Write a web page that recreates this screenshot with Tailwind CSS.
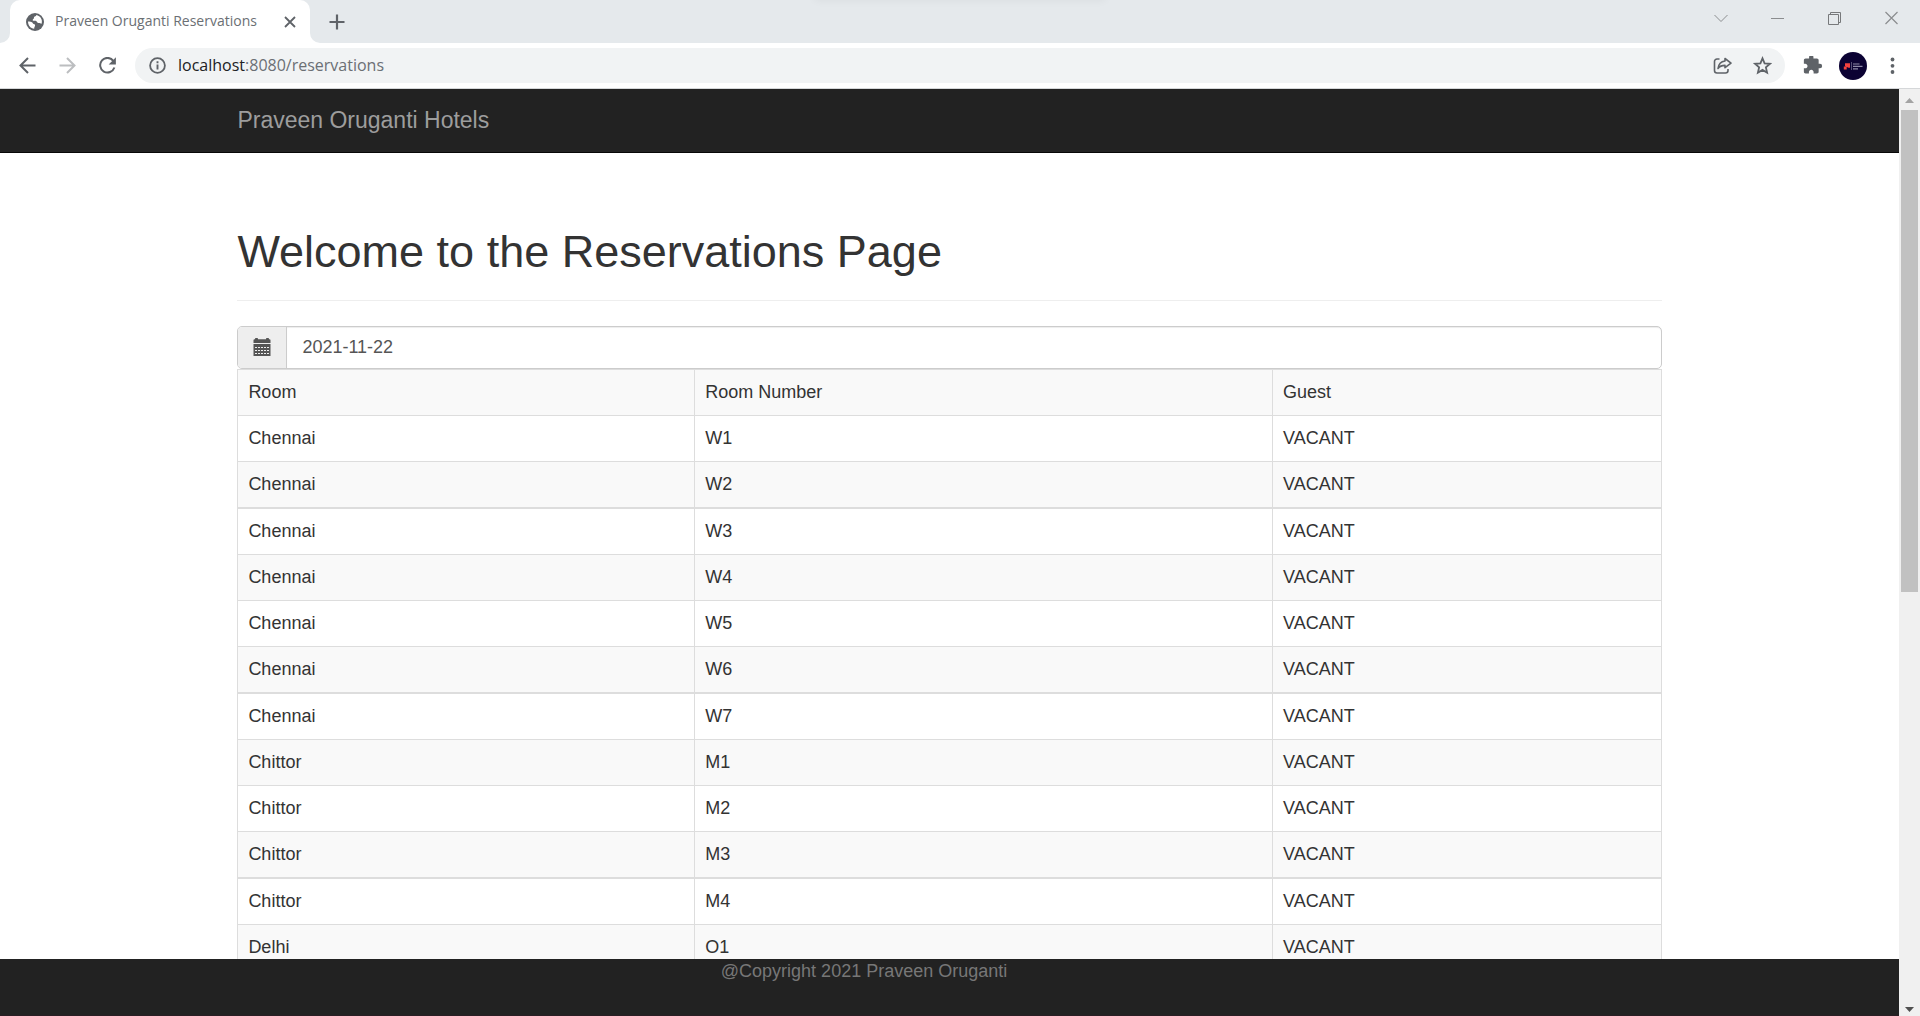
<!DOCTYPE html>
<html lang="en">
<head>
<meta charset="utf-8">
<title>Praveen Oruganti Reservations</title>
<script src="https://cdn.jsdelivr.net/npm/@tailwindcss/browser@4"></script>
</head>
<body class="flex h-screen flex-col overflow-hidden bg-white font-['Liberation_Sans',Arial,sans-serif] text-lg leading-[25px] text-[#333]">

<!-- Tab strip -->
<header class="relative flex h-[43px] shrink-0 items-stretch bg-[#e5e9ec] pl-[10px] font-['Open_Sans',sans-serif]">
  <div class="absolute left-1/2 top-[-10px] h-[10px] w-[290px] -translate-x-1/2 shadow-[0_0_10px_rgba(0,0,0,0.06)]"></div>
  <div class="relative flex w-[300px] items-center rounded-t-[10px] bg-white pl-4 pr-2">
    <svg class="absolute bottom-0 left-[-10px] size-[10px]" viewBox="0 0 10 10" fill="#fff"><path d="M10 0v10H0A10 10 0 0 0 10 0z"/></svg>
    <svg class="absolute bottom-0 right-[-10px] size-[10px]" viewBox="0 0 10 10" fill="#fff"><path d="M0 0v10h10A10 10 0 0 1 0 0z"/></svg>
    <svg class="size-[18px] shrink-0" viewBox="0 0 18 18"><circle cx="9" cy="9" r="9" fill="#5f6368"/><path d="M2 8.6c1.400-.3 3 .1 4 .6 1 .6.700 1.500 1.700 1.800 1.300.3 1.600.9 1.300 1.900-.3.900-.800 1.200-.8 2.900C4.700 15.700 2 12.500 2 8.600zM10.300 2c-.2 1-.6 1.300-1.500 1.600-.9.300-.8 1-.9 1.700-.1.800-1.200.9-1.200 1.600 0 .8.600 1 1.600.9 1.400-.1 2.300.200 2.700 1.200.4.900 1.100 1 1.900 1 .9 0 1.500.200 2.700.700 1.300-4-1.100-7.900-5.300-8.700z" fill="#fff"/></svg>
    <span class="ml-[11px] flex-1 whitespace-nowrap pb-px text-sm text-[#6b6f74]">Praveen Oruganti Reservations</span>
    <button class="grid size-6 place-items-center" aria-label="Close tab"><svg class="size-3" viewBox="0 0 12 12" stroke="#5f6368" stroke-width="1.800"><path d="M1 1l10 10M11 1L1 11"/></svg></button>
  </div>
  <button class="ml-[11px] grid w-8 place-items-center" aria-label="New tab"><svg class="size-4" viewBox="0 0 16 16" stroke="#5f6368" stroke-width="2.200"><path d="M8 .5v15M.5 8h15"/></svg></button>
  <div class="ml-auto flex h-9">
    <button class="grid w-[57px] place-items-center" aria-label="Search tabs"><svg class="size-[14px]" viewBox="0 0 14 14" fill="none" stroke="#8b8d8f"><path d="M.5 4l6.500 6.500L13.500 4"/></svg></button>
    <button class="grid w-[57px] place-items-center" aria-label="Minimize"><svg class="size-[14px]" viewBox="0 0 14 14" stroke="#8b8d8f"><path d="M0 7.500h13"/></svg></button>
    <button class="grid w-[57px] place-items-center" aria-label="Restore"><svg class="size-[14px]" viewBox="0 0 14 14" fill="none" stroke="#77797b"><path d="M.5 3.500h10v10H.5zM2.500 3.500v-2h10v10h-2"/></svg></button>
    <button class="grid w-[57px] place-items-center" aria-label="Close"><svg class="size-[14px]" viewBox="0 0 14 14" stroke="#8b8d8f" stroke-width="1.200"><path d="M.5 1l12 12M12.500 1l-12 12"/></svg></button>
  </div>
</header>

<!-- Toolbar -->
<div class="flex h-[46px] shrink-0 items-center border-b border-[#d5d7d9] bg-white px-[7px] font-['Open_Sans',sans-serif]">
  <button class="grid h-8 w-10 place-items-center" aria-label="Back"><svg class="size-[18px]" viewBox="0 0 18 18" fill="none" stroke="#5f6368" stroke-width="2"><path d="M17.500 8.500H3M10 1L2.500 8.500 10 16"/></svg></button>
  <button class="grid h-8 w-10 place-items-center" aria-label="Forward"><svg class="size-[18px]" viewBox="0 0 18 18" fill="none" stroke="#bcbec0" stroke-width="2"><path d="M1.500 8.500H16M9 1l7.500 7.500L9 16"/></svg></button>
  <button class="grid h-8 w-10 place-items-center" aria-label="Reload"><svg class="size-[18px]" viewBox="0 0 18 18"><path d="M15.300 3.800A7.300 7.300 0 1 0 16.400 10.500" fill="none" stroke="#5f6368" stroke-width="2"/><path d="M17.900.3v7.200h-7.200z" fill="#5f6368"/></svg></button>
  <div class="mx-2 flex h-[35px] flex-1 items-center rounded-full bg-[#f1f3f4] pl-3 pr-[3px]">
    <svg class="size-5" viewBox="0 0 20 20" fill="none" stroke="#5f6368"><circle cx="10.500" cy="9.500" r="7.400" stroke-width="1.800"/><path d="M10.500 8.500v5M10.500 5.300v1.900" stroke-width="1.900"/></svg>
    <div role="textbox" aria-label="Address" class="ml-[11px] flex-1 whitespace-nowrap pb-px text-base text-[#6b6f74]"><span class="text-[#202124]">localhost</span>:8080/reservations</div>
    <button class="grid w-10 place-items-center" aria-label="Share"><svg class="size-5" viewBox="0 0 20 20" fill="none" stroke="#5f6368" stroke-width="1.600" stroke-linejoin="round"><path d="M7.500 3H5a2.500 2.500 0 0 0-2.500 2.500v9A2.500 2.500 0 0 0 5 17h8.500a2.500 2.500 0 0 0 2.500-2.500V13"/><path d="M13 2.500l6 4.600-6 4.600V9.400c-3 0-5.300.8-7 3.100.5-3.900 2.800-6.900 7-7.500z"/></svg></button>
    <button class="grid w-10 place-items-center" aria-label="Bookmark"><svg class="size-5" viewBox="0 0 20 20" fill="none" stroke="#5f6368" stroke-width="1.800"><path d="M10.500 2.300l2.100 5 5.400.5-4.100 3.600 1.200 5.300-4.600-2.800-4.600 2.800 1.200-5.300L3 7.800l5.400-.5z"/></svg></button>
  </div>
  <button class="grid w-10 place-items-center" aria-label="Extensions"><svg class="size-5" viewBox="1 2 23 23" fill="#5f6368"><path d="M20.500 11H19V7c0-1.100-.9-2-2-2h-4V3.500a2.500 2.500 0 0 0-5 0V5H4c-1.100 0-2 .9-2 2v3.800h1.500c1.500 0 2.700 1.200 2.700 2.700S5 16.200 3.500 16.200H2V20c0 1.100.9 2 2 2h3.800v-1.500c0-1.500 1.200-2.700 2.700-2.700s2.700 1.200 2.700 2.700V22H17c1.100 0 2-.9 2-2v-4h1.500a2.500 2.500 0 0 0 0-5z"/></svg></button>
  <button class="grid w-10 place-items-center" aria-label="Profile"><svg class="size-7" viewBox="0 0 28 28"><circle cx="14" cy="14" r="14" fill="#0b0233"/><path d="M6 11.300h5v4.500H9.500L6 14zM4.800 14.500h2.900v3H4.800z" fill="#f4413f"/><path d="M12.500 10v8" stroke="#777394" stroke-width=".7"/><path d="M14 12h6.500M14 14.400h9.500M14 16.800h5" stroke="#8f8aa8" stroke-width="1.200"/></svg></button>
  <button class="grid w-10 place-items-center" aria-label="Menu"><svg class="size-5" viewBox="0 0 20 20" fill="#5f6368"><circle cx="9.500" cy="3.500" r="1.900"/><circle cx="9.500" cy="9.800" r="1.900"/><circle cx="9.500" cy="16" r="1.900"/></svg></button>
</div>

<!-- Page viewport -->
<div class="flex min-h-0 flex-1">
  <div class="flex min-w-0 flex-1 flex-col">
    <nav class="h-16 shrink-0 border-b border-[#080808] bg-[#222]">
      <div class="mx-auto flex h-full w-3/4 items-center pb-px">
        <a href="#" class="text-[23px] text-[#9d9d9d]">Praveen Oruganti Hotels</a>
      </div>
    </nav>

    <main class="min-h-0 flex-1 overflow-hidden">
      <div class="mx-auto w-3/4 pt-[74px]">
        <h1 class="mb-[25px] border-b border-[#eee] pb-[23px] text-[45px] leading-[50px]">Welcome to the Reservations Page</h1>
        <div class="flex h-[43px] rounded-[5px] border border-[#ccc]">
          <label for="date" class="grid w-[49px] place-items-center rounded-l border-r border-[#ccc] bg-[#eee] pb-[2px]" aria-label="Date">
            <svg class="size-[18px]" viewBox="0 0 18 18" fill="#555"><path d="M.5 5V2.300a1 1 0 0 1 1-1H2V.8A.8.8 0 0 1 2.800 0h1.400a.8.8 0 0 1 .8.8v.5h8V.8a.8.8 0 0 1 .8-.8h1.400a.8.8 0 0 1 .8.8v.5h.5a1 1 0 0 1 1 1V5zM.5 6h17v12H.5z"/><path d="M2 9.500h14M2 12.500h14M2 15.500h14" stroke="#eee" stroke-width="1" stroke-dasharray="2 1"/></svg>
          </label>
          <input id="date" type="text" value="2021-11-22" class="min-w-0 flex-1 rounded-r px-[15px] pb-[2px] text-lg text-[#555] shadow-[inset_0_1px_1px_rgba(0,0,0,0.075)] outline-none">
        </div>

        <table class="w-full table-fixed border-separate border-spacing-0 border-l border-t border-[#ddd] text-left [&_td]:h-[46px] [&_td]:border-b [&_td]:border-r [&_td]:border-[#ddd] [&_td]:px-[10px] [&_td]:py-0 [&_tr:nth-child(4n+3)>td]:h-[47px] [&_tr:nth-child(4n+3)>td]:border-b-2 [&_tr:nth-child(odd)]:bg-[#f9f9f9]">
          <colgroup><col class="w-[32.1%]"><col class="w-[40.6%]"><col></colgroup>
          <tbody>
            <tr><td>Room</td><td>Room Number</td><td>Guest</td></tr>
            <tr><td>Chennai</td><td>W1</td><td>VACANT</td></tr>
            <tr><td>Chennai</td><td>W2</td><td>VACANT</td></tr>
            <tr><td>Chennai</td><td>W3</td><td>VACANT</td></tr>
            <tr><td>Chennai</td><td>W4</td><td>VACANT</td></tr>
            <tr><td>Chennai</td><td>W5</td><td>VACANT</td></tr>
            <tr><td>Chennai</td><td>W6</td><td>VACANT</td></tr>
            <tr><td>Chennai</td><td>W7</td><td>VACANT</td></tr>
            <tr><td>Chittor</td><td>M1</td><td>VACANT</td></tr>
            <tr><td>Chittor</td><td>M2</td><td>VACANT</td></tr>
            <tr><td>Chittor</td><td>M3</td><td>VACANT</td></tr>
            <tr><td>Chittor</td><td>M4</td><td>VACANT</td></tr>
            <tr><td>Delhi</td><td>O1</td><td>VACANT</td></tr>
          </tbody>
        </table>
      </div>
    </main>

    <footer class="h-[57px] shrink-0 border-b border-[#2a1e24] bg-[#222]">
      <div class="mx-auto w-3/4">
        <p class="w-[88%] text-center text-[#777]">@Copyright 2021 Praveen Oruganti</p>
      </div>
    </footer>
  </div>

  <!-- Scrollbar -->
  <div class="flex w-[21px] shrink-0 flex-col items-center bg-[#f0f0f0]">
    <svg class="h-[21px] w-[9px] shrink-0" viewBox="0 0 9 21" fill="#a3a3a3"><path d="M4.500 9L9 14H0z"/></svg>
    <div class="h-[52%] w-[17px] bg-[#c1c1c1]"></div>
    <svg class="mt-auto h-[21px] w-[9px] shrink-0" viewBox="0 0 9 21" fill="#505050"><path d="M4.500 17L9 12H0z"/></svg>
  </div>
</div>
</body>
</html>
